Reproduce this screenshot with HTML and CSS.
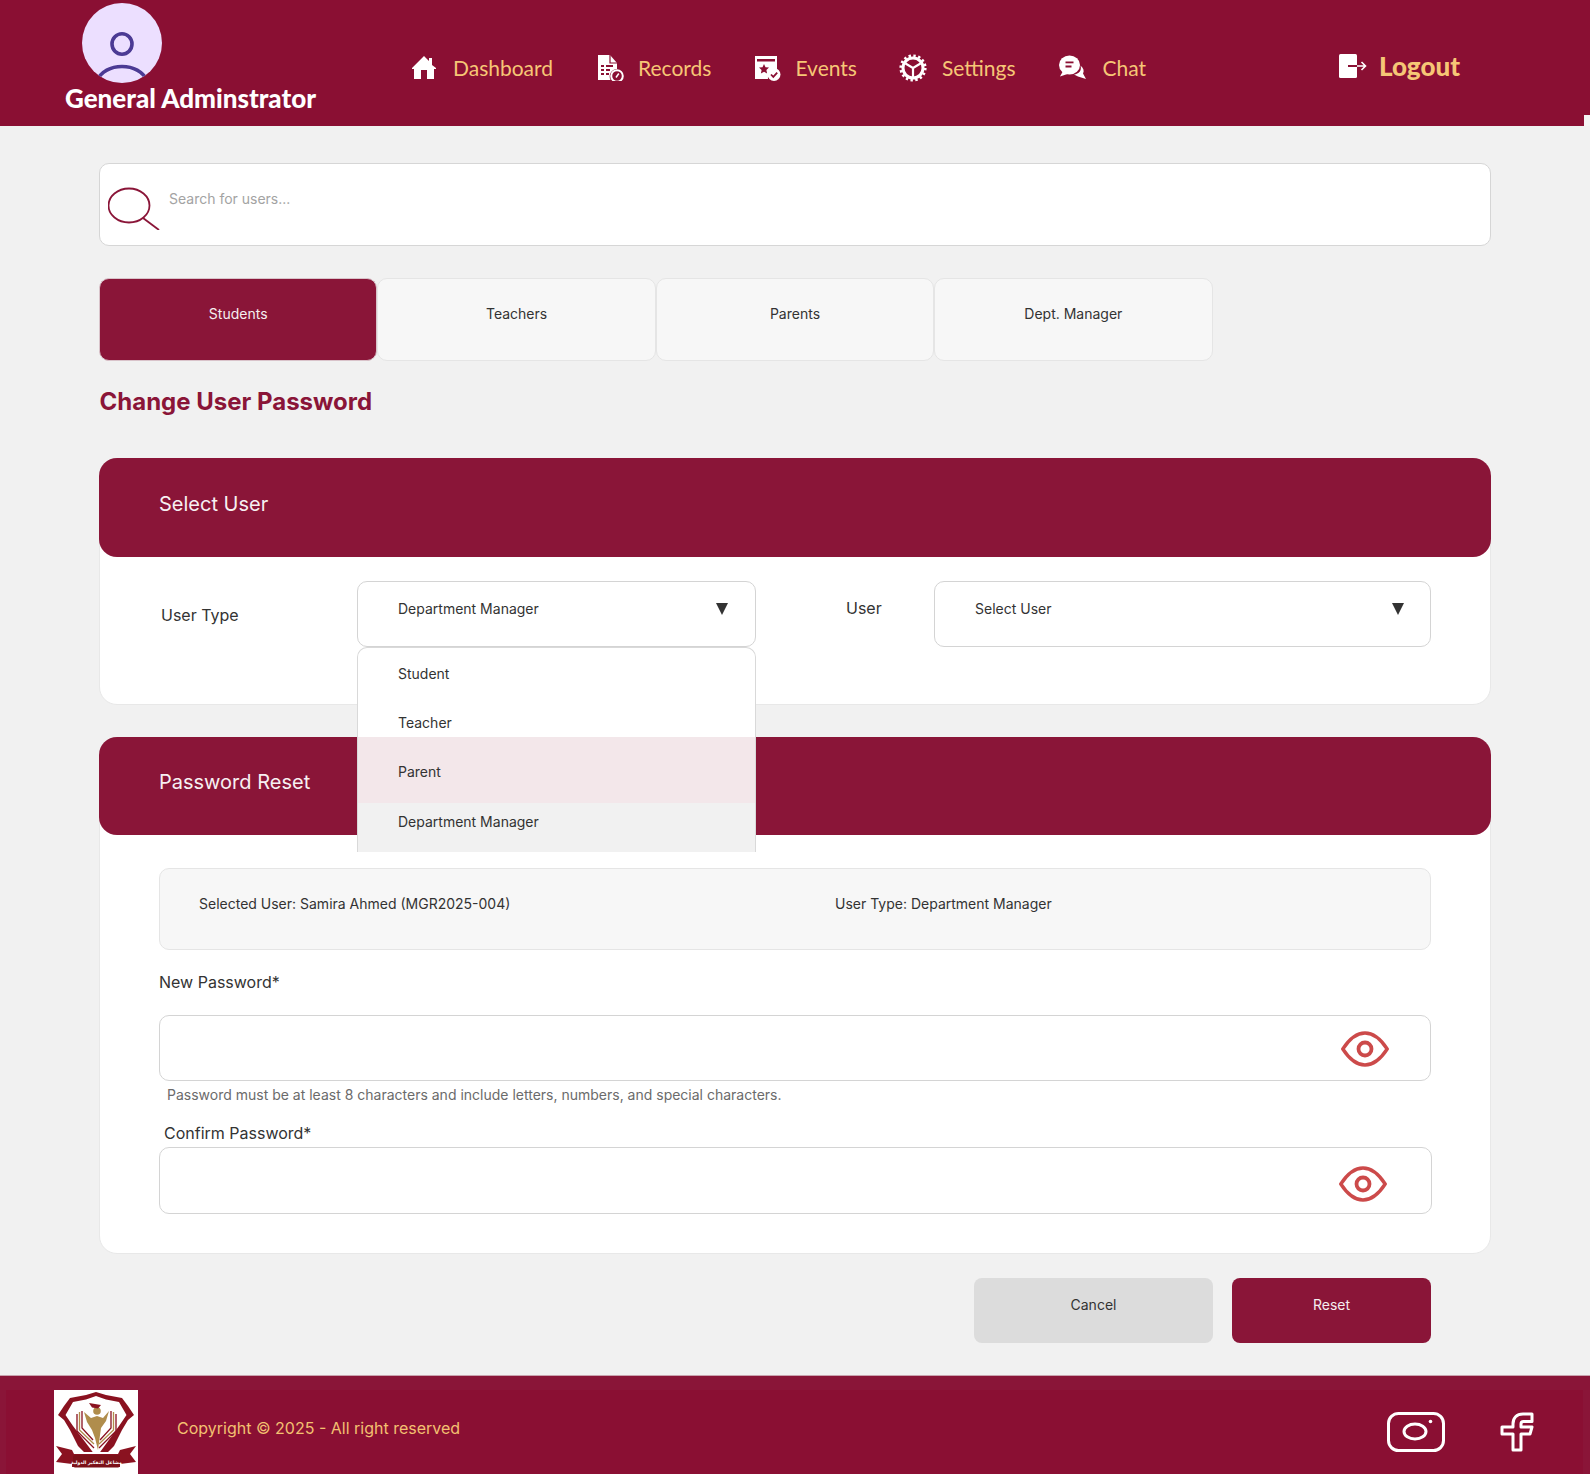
FILE: index.html
```html
<!DOCTYPE html>
<html lang="en">
<head>
<meta charset="utf-8">
<title>Change User Password</title>
<link rel="stylesheet" href="styles.css">
</head>
<body>
<header class="topbar">
  <div class="brand">
    <svg class="avatar" viewBox="0 0 80 80">
      <defs><clipPath id="av"><circle cx="40" cy="40" r="40"/></clipPath></defs>
      <circle cx="40" cy="40" r="40" fill="#ecdfff"/>
      <g clip-path="url(#av)" fill="none" stroke="#4b3a94" stroke-width="3.6">
        <ellipse cx="40" cy="41" rx="10" ry="10.2"/>
        <path d="M14 78C20 68 30 63.5 40 63.5S60 68 66 78"/>
      </g>
    </svg>
    <div class="brand-name">General Adminstrator</div>
  </div>
  <nav class="nav">
    <a class="nav-item nav-home">
      <svg class="nav-icon" viewBox="0 0 28 26" fill="#fff"><path d="M12 1 17 6V3h3v7l4 3v1h-2v10H2V14H0v-1Z"/><rect x="9" y="15" width="6" height="9" fill="#8a0f33"/></svg>
      <span>Dashboard</span>
    </a>
    <a class="nav-item nav-records">
      <svg class="nav-icon" viewBox="0 0 28 26" fill="#fff"><path d="M1 0h12l7 8v6a7.500 7.500 0 0 0-6.500 11H1Z"/><path d="M13 0v8h7" fill="none" stroke="#8a0f33" stroke-width="1.200"/><path d="M4 10h3v2H4Zm5 0h7v2H9Zm-5 4h3v2H4Zm5 0h4v2H9Zm-5 4h3v2H4Zm5 0h3v2H9Z" fill="#8a0f33"/><circle cx="20" cy="21" r="5.800" fill="#8a0f33" stroke="#fff" stroke-width="2"/><path d="m19 22.500 2.800-4" stroke="#fff" stroke-width="1.500"/></svg>
      <span>Records</span>
    </a>
    <a class="nav-item nav-events">
      <svg class="nav-icon" viewBox="0 0 28 26" fill="#fff"><path d="M1 1h22v14a8 8 0 0 0-9 9H1Z"/><rect x="3" y="4" width="18" height="2.500" fill="#8a0f33"/><path d="m10 9 1.500 3.200 3.500.4-2.600 2.400.7 3.500L10 16.800l-3.100 1.700.7-3.500L5 12.600l3.500-.4Z" fill="#8a0f33"/><circle cx="20" cy="19.500" r="6.500"/><path d="m17 19.500 2.300 2.400 3.900-4.300" fill="none" stroke="#8a0f33" stroke-width="1.800"/></svg>
      <span>Events</span>
    </a>
    <a class="nav-item nav-settings">
      <svg class="nav-icon" viewBox="0 0 28 28" fill="none" stroke="#fff"><circle cx="14" cy="14" r="10" stroke-width="3"/><circle cx="14" cy="14" r="12.300" stroke-width="2.600" stroke-dasharray="2.400 2.430"/><path d="M14 14 6.500 9.500M14 14l7.500-4.500M14 14v9" stroke-width="2.200"/></svg>
      <span>Settings</span>
    </a>
    <a class="nav-item nav-chat">
      <svg class="nav-icon" viewBox="0 0 28 26" fill="#fff"><ellipse cx="10.500" cy="10" rx="10.500" ry="9.500"/><path d="M4 16 1 21.500l7.500-2.500Z"/><path d="M21.500 10.500c3 2.500 4 5.500 2.500 8l3 5.500-8-2.500-4-2c5-.5 8-4 6.500-9Z"/><rect x="6.500" y="6.500" width="8" height="1.800" fill="#8a0f33"/><rect x="6.500" y="10.500" width="6" height="2" fill="#8a0f33"/></svg>
      <span>Chat</span>
    </a>
  </nav>
  <a class="logout">
    <svg class="logout-icon" viewBox="0 0 28 24" fill="#fff"><rect x="0" y="0" width="18" height="24" rx="1.500"/><path d="M9 12h9" stroke="#8a0f33" stroke-width="2"/><path d="M18 12h8M22.500 8l4 4-4 4" fill="none" stroke="#fff" stroke-width="1.600"/></svg>
    <span>Logout</span>
  </a>
  <span class="notch"></span>
</header>

<main class="page">
  <div class="search">
    <svg class="search-icon" viewBox="0 0 52 43" fill="none" stroke="#8a1538" stroke-width="1.800"><ellipse cx="21" cy="18.500" rx="20.500" ry="17"/><path d="m35 31 16 12"/></svg>
    <span class="search-text">Search for users...</span>
  </div>

  <div class="tabs">
    <div class="tab tab-active">Students</div>
    <div class="tab">Teachers</div>
    <div class="tab">Parents</div>
    <div class="tab">Dept. Manager</div>
  </div>

  <h1 class="title">Change User Password</h1>

  <section class="card card-select">
    <h2 class="card-head">Select User</h2>
    <div class="select-row">
      <div class="field-label field-label-type">User Type</div>
      <div class="select select-type">
        <span>Department Manager</span><i class="caret"></i>
        <ul class="options">
          <li class="opt opt-student">Student</li>
          <li class="opt opt-teacher">Teacher</li>
          <li class="opt opt-parent">Parent</li>
          <li class="opt opt-manager">Department Manager</li>
        </ul>
      </div>
      <div class="field-label field-label-user">User</div>
      <div class="select select-user"><span>Select User</span><i class="caret"></i></div>
    </div>
  </section>

  <section class="card card-reset">
    <h2 class="card-head card-head-reset">Password Reset</h2>
    <div class="reset-body">
      <div class="info">
        <span>Selected User: Samira Ahmed (MGR2025-004)</span>
        <span>User Type: Department Manager</span>
      </div>
      <div class="label label-new">New Password*</div>
      <div class="pw-input">
        <svg class="eye" viewBox="0 0 48 36" fill="none" stroke="#cc4a4a" stroke-width="3.400"><path d="M1.800 18C8 8.500 15 2 24 2s16 6.500 22.200 16C40 27.500 33 34 24 34S8 27.500 1.800 18Z"/><circle cx="24" cy="18" r="6.500" stroke-width="3.800"/></svg>
      </div>
      <p class="hint">Password must be at least 8 characters and include letters, numbers, and special characters.</p>
      <div class="label label-confirm">Confirm Password*</div>
      <div class="pw-input pw-confirm">
        <svg class="eye" viewBox="0 0 48 36" fill="none" stroke="#cc4a4a" stroke-width="3.400"><path d="M1.800 18C8 8.500 15 2 24 2s16 6.500 22.200 16C40 27.500 33 34 24 34S8 27.500 1.800 18Z"/><circle cx="24" cy="18" r="6.500" stroke-width="3.800"/></svg>
      </div>
    </div>
  </section>

  <div class="actions">
    <div class="btn btn-cancel">Cancel</div>
    <div class="btn btn-reset">Reset</div>
  </div>
</main>

<footer class="footer">
  <div class="footer-inner">
    <svg class="logo" viewBox="0 0 84 85">
      <rect width="84" height="85" fill="#fff"/>
      <path d="M42 2 52 5 68 8 74 16 80 25 74 30 68 40 60 56 54 62H30L24 56 16 40 10 30 4 25 10 16 16 8 32 5Z" fill="#8a1220"/>
      <path d="M42 6 52 9.500 65 12 72.500 25 65 36 42.500 67 19 36 11.500 25 19 12 32 9.500Z" fill="#fff"/>
      <g fill="none" stroke-width="1.300">
        <path d="M23 24V41L40 58" stroke="#8a1220"/>
        <path d="M25.500 22V40L40 54" stroke="#b08d4c"/>
        <path d="M28 21V38L39 50" stroke="#8a1220"/>
        <path d="M62 24V41L45 58" stroke="#8a1220"/>
        <path d="M59.500 22V40L45 54" stroke="#b08d4c"/>
        <path d="M57 21V38L46 50" stroke="#8a1220"/>
      </g>
      <path d="M30 22 37 28 43 26 49 28 55 21 52 31 47 38 44 60 41 48 38 40 33 32Z" fill="#b08d4c"/>
      <circle cx="43" cy="21" r="3.800" fill="#b08d4c"/>
      <path d="M35 13 47 15 44 18.500 38 17.500Z" fill="#8a1220"/>
      <path d="M2 56 18 60 20 64H64L66 60 82 56 76 64 82 72 66 74V77H18V74L2 72 8 64Z" fill="#8a1220"/>
      <rect x="19" y="65" width="47" height="12.500" rx="2" fill="#7c1018"/>
      <text x="42.500" y="73.500" class="logo-text" text-anchor="middle">مشاعل التفكير الدولية</text>
    </svg>
    <span class="copy">Copyright © 2025 - All right reserved</span>
    <div class="social">
      <svg class="ig" viewBox="0 0 58 40" fill="none" stroke="#fff" stroke-width="3"><rect x="1.500" y="1.500" width="55" height="37" rx="10"/><ellipse cx="28" cy="19.500" rx="11" ry="7.500"/><circle cx="43.500" cy="9.500" r="1.800" fill="#fff" stroke="none"/></svg>
      <svg class="fb" viewBox="0 0 34 40" fill="none" stroke="#fff" stroke-width="3" stroke-linejoin="round"><path d="M32 2H23C16.500 2 13 6 13 12v3H2v7h11v16h8V22h9l2-7H21v-3c0-1.500 1-2.500 2.500-2.500H32Z"/></svg>
    </div>
  </div>
</footer>
</body>
</html>
```
FILE: styles.css
```css
* { box-sizing: border-box; }
html, body { margin: 0; padding: 0; }
body { width: 1590px; height: 1474px; background: #f1f1f1; color: #333; font-family: Inter, "Liberation Sans", sans-serif; font-size: 14px; overflow: hidden; }
h1, h2, p, ul { margin: 0; padding: 0; font-weight: inherit; }

.topbar { position: relative; display: flex; height: 126px; background: #8a0f33; color: #f6c676; font-family: Lato, sans-serif; }
.notch { position: absolute; right: 0; bottom: 0; width: 6px; height: 11px; background: #f4f4f4; }
.brand { width: 252px; margin-left: 65px; padding-top: 3px; }
.avatar { display: block; width: 80px; height: 80px; margin-left: 17px; }
.brand-name { color: #fff; font-size: 26px; font-weight: 900; line-height: 30px; white-space: nowrap; }
.nav { display: flex; align-items: center; height: 100%; padding: 10px 0 0 95px; }
.nav-item { display: flex; align-items: center; font-size: 21px; line-height: 26px; white-space: nowrap; }
.nav-icon { display: block; width: 28px; height: 26px; margin-right: 14px; }
.nav-home { margin-right: 44px; }
.nav-home .nav-icon { margin-right: 13px; }
.nav-records { margin-right: 43px; }
.nav-records .nav-icon { margin-right: 13px; }
.nav-events { margin-right: 42px; }
.nav-events .nav-icon { margin-right: 13px; }
.nav-settings { margin-right: 43px; }
.nav-settings .nav-icon { height: 28px; margin-right: 15px; }
.nav-chat .nav-icon { margin-right: 16px; }
.logout { display: flex; align-items: center; height: 100%; margin-left: auto; margin-right: 130px; padding-top: 6px; font-size: 26px; font-weight: 900; }
.logout-icon { display: block; width: 28px; height: 24px; margin-right: 12px; }

.page { padding: 37px 99px 0; }
.search { display: flex; height: 83px; background: #fff; border: 1px solid #d6d6d6; border-radius: 10px; }
.search-icon { display: block; width: 52px; height: 43px; margin: 23px 0 0 8px; }
.search-text { margin: 26px 0 0 9px; color: #a3a3a3; line-height: 18px; }

.tabs { display: flex; margin-top: 32px; }
.tab { width: 278.400px; height: 83px; padding-top: 26px; background: #f7f7f7; border: 1px solid #e5e5e5; border-radius: 10px; line-height: 18px; text-align: center; }
.tab-active { background: #8a1538; border-color: #d9c3ca; color: #f5eef0; }

.title { margin-top: 25px; padding-left: 0.500px; color: #8a1538; font-size: 24px; font-weight: 700; line-height: 32px; }

.card { background: #fff; border: 1px solid #e8e8e8; border-radius: 18px; }
.card-select { height: 247px; margin-top: 40px; }
.card-head { height: 99px; margin: -1px -1px 0; padding: 33px 0 0 60px; background: #8a1538; border-radius: 18px; color: #f7f0f2; font-size: 20px; line-height: 26px; }
.card-head-reset { height: 98px; padding-top: 32px; }
.select-row { position: relative; display: flex; padding: 24px 59px 0 257px; }
.field-label { font-size: 16px; line-height: 20px; }
.field-label-type { position: absolute; left: 61px; top: 24px; padding-top: 24px; }
.field-label-user { width: 178px; padding: 17px 0 0 90px; }
.select { position: relative; height: 66px; padding: 18px 0 0 40px; background: #fff; border: 1px solid #d4d4d4; border-radius: 10px; line-height: 18px; }
.select-type { width: 399px; }
.select-user { flex: 1; }
.caret { position: absolute; right: 26px; top: 21px; width: 0; height: 0; border-left: 6.500px solid transparent; border-right: 6.500px solid transparent; border-top: 12px solid #333; }
.select-type .caret { right: 27px; }
.options { position: absolute; z-index: 2; left: -1px; right: -1px; top: 65px; height: 205px; overflow: hidden; background: #fff; border: 1px solid #d9d9d9; border-bottom: 0; border-radius: 10px 10px 0 0; list-style: none; }
.opt { padding-left: 40px; line-height: 18px; }
.opt-student { height: 49px; padding-top: 17px; }
.opt-teacher { height: 40px; padding-top: 17px; }
.opt-parent { height: 66px; padding-top: 26px; background: #f3e7ea; }
.opt-manager { height: 50px; padding-top: 10px; background: #f1f1f1; }

.card-reset { height: 517px; margin-top: 32px; }
.reset-body { padding: 33px 59px 0; }
.info { display: grid; grid-template-columns: 636px 1fr; height: 82px; padding: 26px 0 0 39px; background: #f7f7f7; border: 1px solid #e5e5e5; border-radius: 10px; line-height: 18px; }
.label { font-size: 16px; line-height: 20px; }
.label-new { margin-top: 22px; }
.label-confirm { margin: 19px 0 0 5px; }
.pw-input { display: flex; align-items: center; justify-content: flex-end; height: 66px; margin-top: 23px; padding-right: 41px; background: #fff; border: 1px solid #d4d4d4; border-radius: 10px; }
.pw-input .eye { margin-top: 2px; }
.pw-confirm { height: 67px; margin: 4px -1px 0 0; padding-right: 44px; }
.eye { display: block; width: 48px; height: 36px; }
.pw-confirm .eye { margin-top: 7px; }
.hint { margin: 5px 0 0 8px; color: #6b6b6b; font-size: 14px; line-height: 18px; }

.actions { display: flex; justify-content: flex-end; gap: 19px; margin: 24px 60px 0 0; }
.btn { height: 65px; padding-top: 18px; border-radius: 8px; line-height: 18px; text-align: center; }
.btn-cancel { width: 239px; background: #dcdcdc; }
.btn-reset { width: 199px; background: #8a1538; color: #f5eef0; }

.footer { position: absolute; left: 0; right: 0; top: 1375px; height: 99px; padding: 14px 7px 0 6px; background: #8a1538; border-top: 1px solid #c9a3ae; }
.footer-inner { display: flex; align-items: flex-start; height: 85px; padding-left: 48px; background: #8a0f33; }
.logo { display: block; width: 84px; height: 85px; }
.logo-text { fill: #fff; font-family: "DejaVu Sans", sans-serif; font-size: 4.600px; font-weight: 700; }
.copy { margin: 28px 0 0 39px; color: #f3c071; font-size: 16px; line-height: 20px; }
.social { display: flex; gap: 55px; margin: 22px 49px 0 auto; }
.ig { display: block; width: 58px; height: 40px; }
.fb { display: block; width: 34px; height: 40px; }
```
